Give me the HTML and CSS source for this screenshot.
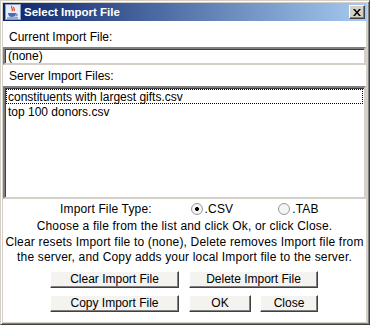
FILE: index.html
```html
<!DOCTYPE html>
<html lang="en">

<head>
    <meta charset="UTF-8">
    <title>Select Import File</title>
    <link rel="stylesheet" href="styles.css">
</head>

<body>
    <div class="window">
        <div class="titlebar">
            <svg class="app-icon" width="16" height="16" viewBox="0 0 16 16">
                <rect x="0.5" y="0.5" width="15" height="15" fill="#e8eef8" stroke="#8a9ab8"/>
                <path d="M7 2 C5 4, 9 5, 7 7 M9 3 C8 4, 10 5, 9 7" stroke="#e0401a" stroke-width="1.2" fill="none"/>
                <path d="M3 9 H11 C11 12, 9 13, 7 13 C5 13, 3 12, 3 9 Z" fill="#4a6cb0"/>
                <path d="M11 10 C13 10, 13 12, 10.5 12" stroke="#4a6cb0" fill="none"/>
                <path d="M2 14 H13" stroke="#4a6cb0"/>
            </svg>
            <span class="title">Select Import File</span>
            <button class="close-btn">
                <svg width="8" height="7" viewBox="0 0 8 7">
                    <path d="M0 0 L2 0 L4 2.5 L6 0 L8 0 L5 3.5 L8 7 L6 7 L4 4.5 L2 7 L0 7 L3 3.5 Z" fill="#000"/>
                </svg>
            </button>
        </div>

        <div class="content">
            <div class="label">Current Import File:</div>
            <div class="field">(none)</div>

            <div class="label">Server Import Files:</div>
            <div class="file-list">
                <div class="item focused">constituents with largest gifts.csv</div>
                <div class="item">top 100 donors.csv</div>
            </div>

            <div class="type-row">
                <span class="type-label">Import File Type:</span>
                <span class="radio checked">.CSV</span>
                <span class="radio">.TAB</span>
            </div>

            <div class="info">
                Choose a file from the list and click Ok, or click Close.<br>
                Clear resets Import file to (none), Delete removes Import file from<br>
                the server, and Copy adds your local Import file to the server.
            </div>

            <div class="buttons">
                <button class="btn">Clear Import File</button>
                <button class="btn">Delete Import File</button>
                <button class="btn">Copy Import File</button>
                <div class="btn-pair">
                    <button class="btn ok">OK</button>
                    <button class="btn close">Close</button>
                </div>
            </div>
        </div>
    </div>
</body>

</html>
```

FILE: styles.css
```css
body {
    margin: 0;
    padding: 0;
    width: 370px;
    height: 325px;
    overflow: hidden;
    font-family: "Liberation Sans", Arial, sans-serif;
    font-size: 12px;
    color: #000;
}

.window {
    box-sizing: border-box;
    width: 370px;
    height: 325px;
    background: #d4d0c8;
    border: 1px solid;
    border-color: #d4d0c8 #404040 #404040 #d4d0c8;
    box-shadow: inset 1px 1px #fff, inset -1px -1px #808080;
    padding: 2px;
    display: flex;
    flex-direction: column;
}

.titlebar {
    height: 18px;
    display: flex;
    align-items: center;
    padding: 0 2px 0 2px;
    background: linear-gradient(to right, #0a246a, #a6caf0);
    color: #fff;
}

.app-icon {
    flex: none;
    margin-right: 3px;
}

.title {
    font-weight: bold;
    font-size: 11.5px;
    flex: 1;
}

.close-btn {
    box-sizing: border-box;
    width: 16px;
    height: 14px;
    padding: 0;
    margin: 0;
    background: #d4d0c8;
    border: 1px solid;
    border-color: #fff #404040 #404040 #fff;
    box-shadow: inset -1px -1px #808080;
    display: flex;
    align-items: center;
    justify-content: center;
}

.content {
    flex: 1;
    background: #fff;
    display: flex;
    flex-direction: column;
    padding: 7px 0 0 0;
    margin-right: 1px;
}

.label {
    line-height: 18px;
    padding-left: 6px;
}

.field {
    box-sizing: border-box;
    height: 18px;
    line-height: 14px;
    margin: 1px 0 2px 0;
    padding-left: 3px;
    border: 2px solid;
    border-color: #808080 #d4d0c8 #d4d0c8 #808080;
    box-shadow: inset 1px 1px #404040;
}

.file-list {
    box-sizing: border-box;
    height: 113px;
    margin-top: 1px;
    border: 2px solid;
    border-color: #808080 #d4d0c8 #d4d0c8 #808080;
    box-shadow: inset 1px 1px #404040;
    padding: 1px 1px 0 1px;
}

.item {
    height: 15px;
    line-height: 15px;
    padding-left: 1px;
    border: 1px solid transparent;
    box-sizing: border-box;
}

.item.focused {
    border: 1px dotted #000;
}

.type-row {
    line-height: 18px;
    height: 18px;
    display: flex;
    align-items: center;
    margin-top: 1px;
    letter-spacing: 0.15px;
}

.type-label {
    margin-left: 57px;
    width: 131px;
}

.radio {
    display: flex;
    align-items: center;
    width: 88px;
}

.radio::before {
    content: "";
    box-sizing: border-box;
    width: 12px;
    height: 12px;
    border-radius: 50%;
    border: 1px solid #9a9a9a;
    background: #f4f4f4;
    margin-right: 2px;
}

.radio.checked::before {
    background: radial-gradient(circle, #000 0 1.8px, #f4f4f4 2.2px);
}

.info {
    text-align: center;
    line-height: 15.5px;
    letter-spacing: 0.18px;
    margin-top: 1px;
}

.buttons {
    display: grid;
    grid-template-columns: 129px 129px;
    column-gap: 10px;
    row-gap: 7px;
    margin: 5px 0 0 47px;
}

.btn-pair {
    display: flex;
    justify-content: space-between;
}

.btn {
    box-sizing: border-box;
    height: 17px;
    padding: 0;
    font-family: "Liberation Sans", Arial, sans-serif;
    font-size: 12px;
    color: #000;
    background: #f4f3ef;
    border: 1px solid;
    border-color: #fff #404040 #404040 #fff;
    box-shadow: inset -1px -1px #808080;
}

.btn.ok {
    width: 62px;
}

.btn.close {
    width: 58px;
}
```
